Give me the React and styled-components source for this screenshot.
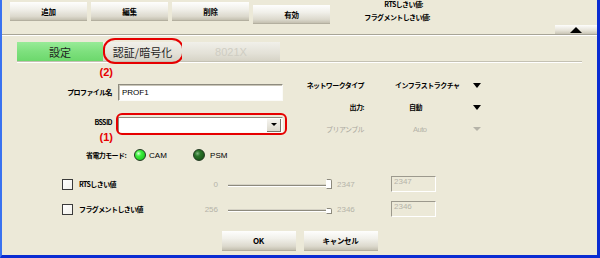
import React from "react";
import styled, { createGlobalStyle } from "styled-components";

const Global = createGlobalStyle`
  html, body { margin: 0; padding: 0; background: #ece9d8; }
`;

const Window = styled.div`
  width: 600px;
  height: 258px;
  box-sizing: border-box;
  background: #ece9d8;
  border-left: 2px solid #3a72f0;
  border-right: 3px solid #0a2cd2;
  border-bottom: 3px solid #0a2cd2;
  overflow: hidden;
  display: flex;
  flex-direction: column;
  font-family: "Noto Sans CJK JP", "Liberation Sans", sans-serif;
  font-size: 7px;
  font-weight: 600;
  color: #000;
`;

const TopBar = styled.div`
  flex: none;
  height: 35px;
  box-sizing: border-box;
  display: flex;
  align-items: flex-start;
  padding-left: 8px;
  border-bottom: 1px solid #a8a597;
  box-shadow: 0 1px 0 #fff;
`;

const ButtonGroup = styled.div`
  display: flex;
  gap: 4px;
`;

const GradButton = styled.div`
  width: ${p => p.$w || 77}px;
  height: ${p => p.$h || 19}px;
  margin-top: ${p => p.$top || 0}px;
  box-sizing: border-box;
  display: flex;
  align-items: center;
  justify-content: center;
  background: linear-gradient(#fefefd, #f1f0ea 40%, #dcd9cd 80%, #c4c0b0);
  border-bottom: 1px solid #b3af9f;
  font-size: ${p => p.$fs || 7.5}px;
  letter-spacing: -0.3px;
`;

const TopLabels = styled.div`
  width: 96px;
  margin-left: 4px;
  display: flex;
  flex-direction: column;
  align-items: flex-end;
  gap: 5px;
  line-height: 8px;
  letter-spacing: -0.6px;
`;

const TopLabel = styled.span`
  padding-right: ${p => p.$pad || 0}px;
`;

const UpButton = styled.div`
  margin-left: auto;
  align-self: flex-end;
  width: 42px;
  height: 9px;
  display: flex;
  align-items: center;
  justify-content: center;
  background: linear-gradient(#fdfdfb, #e6e3d8 60%, #c9c5b5);
`;

const UpTriangle = styled.span`
  width: 0;
  height: 0;
  border-left: 6px solid transparent;
  border-right: 6px solid transparent;
  border-bottom: 6px solid #000;
`;

const TabRow = styled.div`
  flex: none;
  display: flex;
  width: 565px;
  margin: 7px 0 0 15px;
  border-bottom: 1px solid #c4c1b3;
  box-shadow: 0 1px 0 #fff;
`;

const Tab = styled.div`
  position: relative;
  width: ${p => p.$w}px;
  height: 19px;
  display: flex;
  align-items: center;
  justify-content: center;
  font-size: 11px;
  font-weight: 400;
  font-family: ${p => p.$latin ? '"Liberation Sans", sans-serif' : 'inherit'};
  color: ${p => (p.$disabled ? "#cfcdc3" : "#1e1e1e")};
  background: ${p =>
    p.$active
      ? "linear-gradient(#98eb98, #7ee07e 50%, #6cd86c)"
      : "linear-gradient(#f1f0ea, #e3e1d7 60%, #d6d3c6)"};
`;

const Ring = styled.span`
  position: absolute;
  top: ${p => p.$t}px;
  right: ${p => p.$r}px;
  bottom: ${p => p.$b}px;
  left: ${p => p.$l}px;
  border: 2px solid #e60000;
  border-radius: ${p => p.$rad};
  pointer-events: none;
`;

const Body = styled.div`
  flex: none;
  display: flex;
  align-items: flex-start;
`;

const LeftCol = styled.div`
  width: 281px;
  display: flex;
  flex-direction: column;
`;

const FieldRow = styled.div`
  display: grid;
  grid-template-columns: 110px 165px;
  column-gap: 6px;
  align-items: ${p => p.$align || "center"};
  margin-top: ${p => p.$top}px;
`;

const Label = styled.div`
  text-align: right;
  letter-spacing: -0.6px;
  white-space: nowrap;
  line-height: ${p => p.$lh || 9}px;
  color: ${p => (p.$disabled ? "#a9a79c" : "#000")};
  font-weight: ${p => (p.$disabled ? 400 : 600)};
`;

const LabelStack = styled.div`
  display: flex;
  flex-direction: column;
  align-items: flex-end;
  padding-top: 1px;
`;

const Mark = styled.div`
  font-family: "Liberation Sans", sans-serif;
  font-weight: bold;
  font-size: 11px;
  line-height: 12px;
  color: #e60000;
  text-align: right;
  margin-right: -1px;
  margin-top: ${p => p.$top || 0}px;
`;

const TextInput = styled.div`
  height: 17px;
  box-sizing: border-box;
  background: #fff;
  border: 1px solid;
  border-color: #8e8b7f #fbfbf8 #fbfbf8 #8e8b7f;
  box-shadow: inset 1px 1px 0 #c9c6b9;
  padding-left: 3px;
  display: flex;
  align-items: center;
  font-family: "Liberation Sans", sans-serif;
  font-weight: 400;
  font-size: 8px;
`;

const Combo = styled.div`
  position: relative;
  height: 16px;
  box-sizing: border-box;
  background: #fff;
  border: 1px solid;
  border-color: #8e8b7f #fbfbf8 #fbfbf8 #8e8b7f;
  display: flex;
  justify-content: flex-end;
  align-items: center;
  padding-right: 1px;
`;

const ComboButton = styled.div`
  width: 13px;
  height: 12px;
  background: linear-gradient(#f6f5f0, #dcd9cd);
  border-right: 1px solid #7a776b;
  border-bottom: 1px solid #7a776b;
  display: flex;
  align-items: center;
  justify-content: center;
`;

const DownTriangle = styled.span`
  width: 0;
  height: 0;
  border-left: ${p => p.$w / 2}px solid transparent;
  border-right: ${p => p.$w / 2}px solid transparent;
  border-top: ${p => p.$h}px solid ${p => p.$c || "#000"};
`;

const PowerRow = styled.div`
  display: flex;
  align-items: center;
  height: 12px;
  margin: 6px 0 0 84px;
`;

const RadioItem = styled.div`
  display: flex;
  align-items: center;
  gap: ${p => p.$gap}px;
  width: ${p => p.$w || "auto"};
  margin-left: ${p => p.$ml || 0}px;
`;

const Radio = styled.span`
  width: 10px;
  height: 10px;
  border-radius: 50%;
  border: 1px solid #203a20;
  background: ${p =>
    p.$on
      ? "radial-gradient(circle at 35% 35%, #d8ffd8 0, #3df03d 30%, #12b812 100%)"
      : "radial-gradient(circle at 35% 35%, #7fb47f 0, #2a742a 30%, #124712 100%)"};
`;

const Latin = styled.span`
  font-family: "Liberation Sans", sans-serif;
  font-size: ${p => p.$fs || 8}px;
  font-weight: 400;
  color: ${p => p.$c || "#000"};
`;

const RightCol = styled.div`
  margin: 16px 0 0 17px;
  display: grid;
  grid-template-columns: 64px 109px 9px;
  grid-auto-rows: 14px;
  row-gap: 8px;
  align-items: center;
`;

const Value = styled.div`
  padding-left: ${p => 31 + (p.$indent || 0)}px;
  letter-spacing: -0.5px;
  white-space: nowrap;
  color: ${p => (p.$disabled ? "#a9a79c" : "#000")};
`;

const ThresholdRow = styled.div`
  flex: none;
  display: flex;
  align-items: center;
  height: 16px;
  margin-top: ${p => p.$top}px;
  padding-left: 60px;
`;

const CheckBox = styled.span`
  width: 9px;
  height: 9px;
  flex: none;
  background: linear-gradient(135deg, #fff, #f2f1eb);
  border: 1px solid #3b3b3b;
`;

const RowLabel = styled.span`
  width: 120px;
  margin-left: 6px;
  letter-spacing: -0.6px;
  white-space: nowrap;
`;

const NumText = styled.span`
  width: ${p => p.$w}px;
  margin-left: ${p => p.$ml || 0}px;
  text-align: ${p => p.$align || "left"};
  font-family: "Liberation Sans", sans-serif;
  font-weight: 400;
  font-size: 8px;
  color: #b5b3a8;
  flex: none;
`;

const Slider = styled.div`
  width: 104px;
  margin-left: 10px;
  display: flex;
  align-items: flex-end;
  height: 10px;
  flex: none;
`;

const Track = styled.div`
  flex: 1;
  height: 1px;
  margin-bottom: 2px;
  background: #8d8a7d;
  border-bottom: 1px solid #fff;
  box-shadow: 0 -1px 0 #d6d3c6;
`;

const Thumb = styled.div`
  width: 4px;
  height: ${p => p.$h}px;
  background: #fff;
  border: 1px solid #8d8a7d;
  border-left-color: #fff;
  border-radius: 0 2px 0 0;
`;

const FieldBox = styled.div`
  width: 45px;
  height: 16px;
  box-sizing: border-box;
  border: 1px solid;
  border-color: #9c998d #fff #fff #9c998d;
  padding-left: 2px;
  display: flex;
  align-items: flex-start;
  font-family: "Liberation Sans", sans-serif;
  font-weight: 400;
  font-size: 8px;
  color: #b5b3a8;
`;

const DialogButtons = styled.div`
  flex: none;
  display: flex;
  justify-content: center;
  gap: 8px;
  margin-top: 14px;
`;

const App = () => {
  return (
    <>
      <Global />
      <Window>
        <TopBar>
          <ButtonGroup>
            <GradButton $top={2}>追加</GradButton>
            <GradButton $top={2}>編集</GradButton>
            <GradButton $top={2}>削除</GradButton>
            <GradButton $top={5}>有効</GradButton>
          </ButtonGroup>
          <TopLabels>
            <TopLabel $pad={7}>RTSしきい値:</TopLabel>
            <TopLabel>フラグメントしきい値:</TopLabel>
          </TopLabels>
          <UpButton>
            <UpTriangle />
          </UpButton>
        </TopBar>

        <TabRow>
          <Tab $w={86} $active>設定</Tab>
          <Tab $w={79}>
            認証/暗号化
            <Ring $t={-4} $r={-2} $b={-3} $l={0} $rad="12px / 11px" />
          </Tab>
          <Tab $w={98} $disabled $latin>8021X</Tab>
        </TabRow>

        <Body>
          <LeftCol>
            <FieldRow $top={4}>
              <Mark>(2)</Mark>
            </FieldRow>
            <FieldRow $top={6}>
              <Label>プロファイル名</Label>
              <TextInput>PROF1</TextInput>
            </FieldRow>
            <FieldRow $top={16} $align="start">
              <LabelStack>
                <Label>BSSID</Label>
                <Mark $top={4}>(1)</Mark>
              </LabelStack>
              <Combo>
                <ComboButton>
                  <DownTriangle $w={6} $h={3} />
                </ComboButton>
                <Ring $t={-5} $r={-5} $b={-3} $l={-3} $rad="6px" />
              </Combo>
            </FieldRow>
            <PowerRow>
              <Label>省電力モード:</Label>
              <RadioItem $gap={3} $w="59px" $ml={8}>
                <Radio $on />
                <Latin>CAM</Latin>
              </RadioItem>
              <RadioItem $gap={5}>
                <Radio />
                <Latin>PSM</Latin>
              </RadioItem>
            </PowerRow>
          </LeftCol>

          <RightCol>
            <Label>ネットワークタイプ</Label>
            <Value>インフラストラクチャ</Value>
            <DownTriangle $w={9} $h={5} />
            <Label>出力:</Label>
            <Value $indent={14}>自動</Value>
            <DownTriangle $w={9} $h={5} />
            <Label $disabled>プリアンブル</Label>
            <Value $indent={18} $disabled>
              <Latin $fs={7.5} $c="#b5b3a8">Auto</Latin>
            </Value>
            <DownTriangle $w={9} $h={4} $c="#b5b3a8" />
          </RightCol>
        </Body>

        <ThresholdRow $top={15}>
          <CheckBox />
          <RowLabel>RTSしきい値</RowLabel>
          <NumText $w={19} $align="right">0</NumText>
          <Slider>
            <Track />
            <Thumb $h={8} />
          </Slider>
          <NumText $w={54} $ml={5}>2347</NumText>
          <FieldBox>2347</FieldBox>
        </ThresholdRow>
        <ThresholdRow $top={9}>
          <CheckBox />
          <RowLabel>フラグメントしきい値</RowLabel>
          <NumText $w={19} $align="right">256</NumText>
          <Slider>
            <Track />
            <Thumb $h={4} />
          </Slider>
          <NumText $w={54} $ml={5}>2346</NumText>
          <FieldBox>2346</FieldBox>
        </ThresholdRow>

        <DialogButtons>
          <GradButton $w={74} $h={20} $fs={8}>OK</GradButton>
          <GradButton $w={74} $h={20} $fs={7.5}>キャンセル</GradButton>
        </DialogButtons>
      </Window>
    </>
  );
};

export default App;
